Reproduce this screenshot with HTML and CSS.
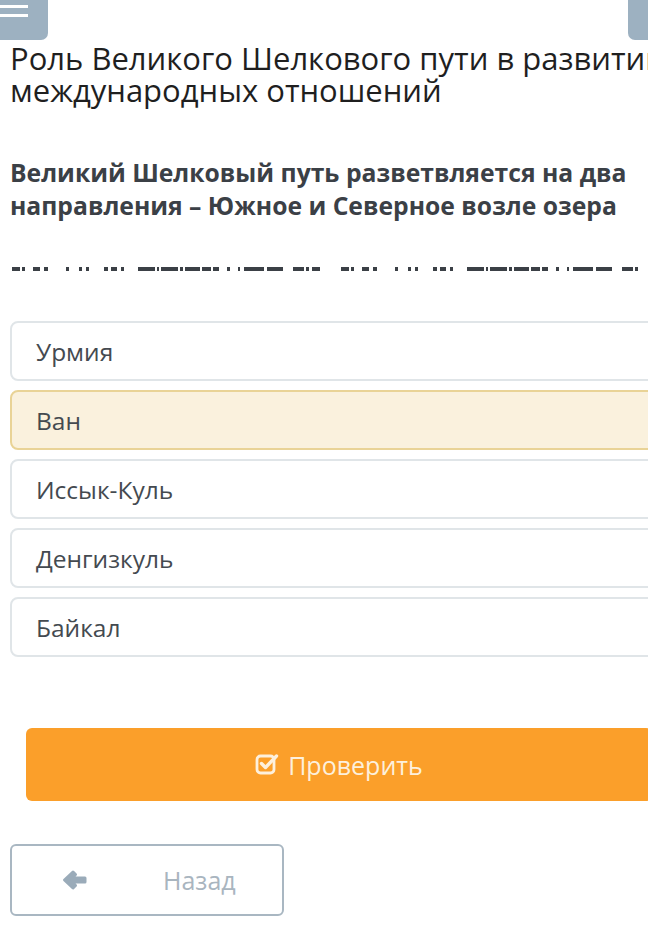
FILE: index.html
```html
<!DOCTYPE html>
<html lang="ru">
<head>
    <meta charset="UTF-8">
    <meta name="viewport" content="width=device-width, initial-scale=1.0">
    <title>Роль Великого Шелкового пути</title>
    <link rel="stylesheet" href="styles.css">
</head>
<body>
    <div class="page">
        <div class="topbar">
            <button class="menu-btn" aria-label="Меню">
                <span class="bar"></span>
                <span class="bar"></span>
            </button>
            <div class="side-tab"></div>
        </div>

        <h1 class="lesson-title">Роль Великого Шелкового пути в развитии<br>международных отношений</h1>

        <p class="question">Великий Шелковый путь разветвляется на два направления – Южное и Северное возле озера</p>

        <!-- clipped answer line -->
        <svg class="blank-line" width="648" height="4" viewBox="0 0 648 4">
            <g fill="#3b4046">
                <rect x="12" y="0" width="8" height="4"/>
                <rect x="22" y="0" width="3" height="4"/>
                <rect x="33" y="0" width="7" height="4"/>
                <rect x="44" y="0" width="4" height="4"/>
                <rect x="66" y="0" width="3" height="4"/>
                <rect x="79" y="0" width="3" height="4"/>
                <rect x="86" y="0" width="3" height="4"/>
                <rect x="104" y="0" width="4" height="4"/>
                <rect x="111" y="0" width="6" height="4"/>
                <rect x="121" y="0" width="3" height="4"/>
                <rect x="138" y="0" width="17" height="4"/>
                <rect x="157" y="0" width="2" height="4"/>
                <rect x="161" y="0" width="17" height="4"/>
                <rect x="180" y="0" width="3" height="4"/>
                <rect x="185" y="0" width="15" height="4"/>
                <rect x="202" y="0" width="9" height="4"/>
                <rect x="213" y="0" width="6" height="4"/>
                <rect x="227" y="0" width="3" height="4"/>
                <rect x="238" y="0" width="2" height="4"/>
                <rect x="244" y="0" width="20" height="4"/>
                <rect x="267" y="0" width="16" height="4"/>
                <rect x="293" y="0" width="11" height="4"/>
                <rect x="306" y="0" width="3" height="4"/>
                <rect x="312" y="0" width="8" height="4"/>
            </g>
            <g fill="#3b4046" transform="translate(329 0)">
                <rect x="12" y="0" width="8" height="4"/>
                <rect x="22" y="0" width="3" height="4"/>
                <rect x="33" y="0" width="7" height="4"/>
                <rect x="44" y="0" width="4" height="4"/>
                <rect x="66" y="0" width="3" height="4"/>
                <rect x="79" y="0" width="3" height="4"/>
                <rect x="86" y="0" width="3" height="4"/>
                <rect x="104" y="0" width="4" height="4"/>
                <rect x="111" y="0" width="6" height="4"/>
                <rect x="121" y="0" width="3" height="4"/>
                <rect x="138" y="0" width="17" height="4"/>
                <rect x="157" y="0" width="2" height="4"/>
                <rect x="161" y="0" width="17" height="4"/>
                <rect x="180" y="0" width="3" height="4"/>
                <rect x="185" y="0" width="15" height="4"/>
                <rect x="202" y="0" width="9" height="4"/>
                <rect x="213" y="0" width="6" height="4"/>
                <rect x="227" y="0" width="3" height="4"/>
                <rect x="238" y="0" width="2" height="4"/>
                <rect x="244" y="0" width="20" height="4"/>
                <rect x="267" y="0" width="16" height="4"/>
                <rect x="293" y="0" width="11" height="4"/>
                <rect x="306" y="0" width="3" height="4"/>
            </g>
        </svg>

        <div class="options">
            <div class="option">Урмия</div>
            <div class="option selected">Ван</div>
            <div class="option">Иссык-Куль</div>
            <div class="option">Денгизкуль</div>
            <div class="option">Байкал</div>
        </div>

        <button class="check-btn">
            <svg class="check-icon" width="24" height="23" viewBox="0 0 24 23">
                <rect x="2" y="4" width="17" height="17" rx="3.5" fill="none" stroke="currentColor" stroke-width="2.8"/>
                <path d="M6.5 11.5 L10.5 15.5 L21.5 4" fill="none" stroke="currentColor" stroke-width="3.4" stroke-linecap="round" stroke-linejoin="round"/>
            </svg>
            <span>Проверить</span>
        </button>

        <button class="back-btn">
            <svg class="back-icon" width="26" height="22" viewBox="0 0 26 22">
                <path d="M2.5 11 L11 3 L13.5 5.5 L9 9 H23 V13 H9 L13.5 16.5 L11 19 Z" fill="currentColor" stroke="currentColor" stroke-width="3" stroke-linejoin="round"/>
            </svg>
            <span>Назад</span>
        </button>
    </div>
</body>
</html>
```

FILE: styles.css
```css
* {
    box-sizing: border-box;
    margin: 0;
    padding: 0;
}

html, body {
    width: 100%;
    height: 100%;
    overflow: hidden;
    background: #fff;
}

body {
    font-family: "Open Sans", "Noto Sans", Arial, sans-serif;
    color: #222;
}

.page {
    width: 668px;
    display: flex;
    flex-direction: column;
}

/* top bar */
.topbar {
    display: flex;
    justify-content: space-between;
    width: 648px;
    height: 40px;
}

.menu-btn {
    width: 48px;
    height: 40px;
    border: none;
    background-color: #9db1c1;
    border-bottom-right-radius: 7px;
    display: flex;
    flex-direction: column;
    gap: 6px;
    padding-top: 5px;
}

.menu-btn .bar {
    display: block;
    width: 28px;
    height: 3px;
    background-color: #fff;
}

.side-tab {
    width: 20px;
    height: 40px;
    background-color: #9db1c1;
    border-bottom-left-radius: 7px;
}

/* headings */
.lesson-title {
    font-weight: 400;
    font-size: 31px;
    line-height: 32px;
    padding: 2px 0 0 10px;
    color: #1f1f1f;
    white-space: nowrap;
}

.question {
    margin-top: 50px;
    padding-left: 10px;
    width: 660px;
    font-size: 24.7px;
    font-weight: 700;
    line-height: 33px;
    color: #3b4046;
}

.blank-line {
    display: block;
    margin-top: 45px;
}

/* answers */
.options {
    margin-top: 50px;
    margin-left: 10px;
    display: flex;
    flex-direction: column;
    gap: 9px;
}

.option {
    height: 60px;
    display: flex;
    align-items: center;
    padding-left: 24px;
    border: 2px solid #e0e5e8;
    border-radius: 8px;
    font-size: 24.5px;
    color: #444a50;
    background: #fff;
}

.option.selected {
    background-color: #faf1dd;
    border-color: #e9d396;
}

/* buttons */
.check-btn {
    margin: 71px 16px 0 26px;
    height: 73px;
    border: none;
    border-radius: 6px;
    background-color: #fb9f2a;
    color: #fdf0dc;
    font-family: inherit;
    font-size: 25px;
    display: flex;
    align-items: center;
    justify-content: center;
    gap: 9px;
}

.check-icon {
    margin-top: -3px;
}

.back-btn {
    margin: 43px 0 0 10px;
    width: 274px;
    height: 72px;
    border: 2px solid #a9b7c2;
    border-radius: 6px;
    background: #fff;
    color: #a9b5bf;
    font-family: inherit;
    font-size: 25px;
    display: flex;
    align-items: center;
    padding-left: 50px;
}

.back-icon {
    color: #9aabb9;
    margin-right: 75px;
}
```
